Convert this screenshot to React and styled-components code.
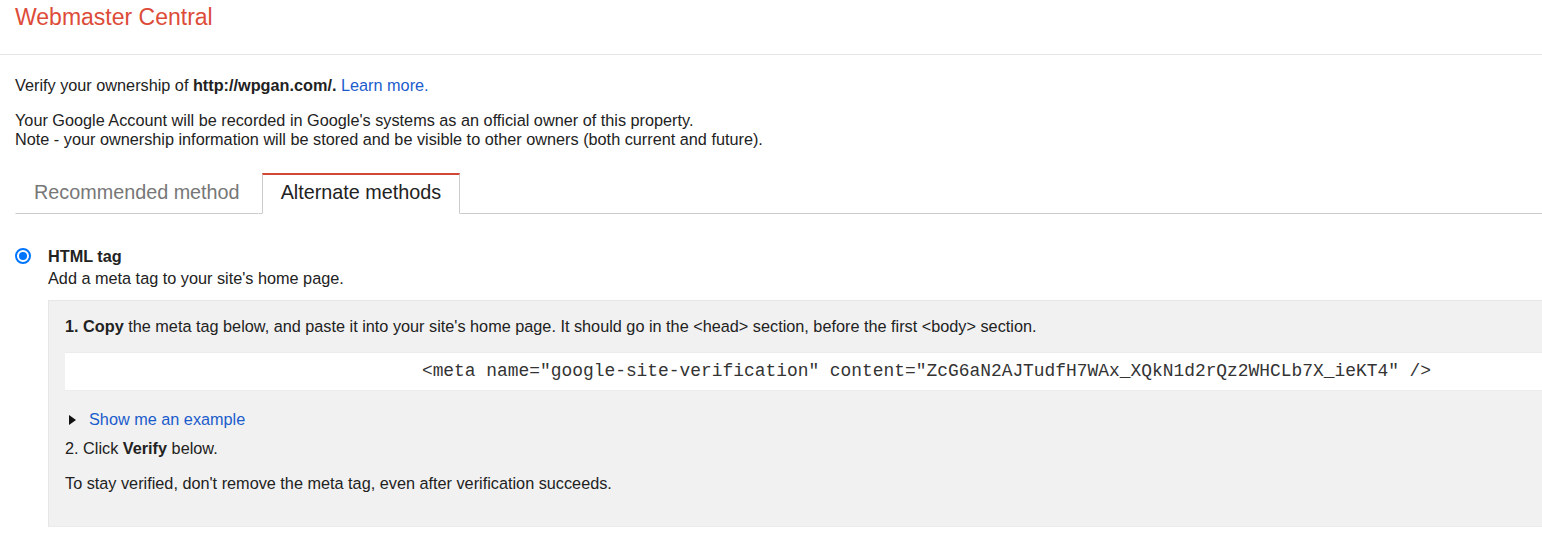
import React from "react";
import styled, { createGlobalStyle } from "styled-components";

const Global = createGlobalStyle`
  html, body {
    margin: 0;
    padding: 0;
    overflow: hidden;
    background: #fff;
  }
  body {
    font-family: "Liberation Sans", Arial, sans-serif;
    font-size: 16.25px;
    line-height: 19px;
    color: #222;
  }
`;

const Page = styled.div`
  width: 1820px;
`;

const Header = styled.header`
  box-sizing: border-box;
  height: 55px;
  padding: 4px 0 0 15px;
  border-bottom: 1px solid #e5e5e5;
`;

const Title = styled.h1`
  margin: 0;
  font-size: 23px;
  line-height: 27px;
  font-weight: normal;
  color: #dd4b39;
`;

const Main = styled.main`
  padding: 21px 0 0 15px;
`;

const Para = styled.p`
  margin: ${(p) => p.$mt || 0}px 0 0;
`;

const Link = styled.a`
  color: #1a5ccc;
  text-decoration: none;
  cursor: pointer;
`;

const TabStrip = styled.div`
  display: flex;
  gap: 3px;
  margin-top: 24px;
  border-bottom: 1px solid #cccccc;
`;

const Tab = styled.div`
  padding: 5px 18px 9px;
  font-size: 19.8px;
  line-height: 24px;
  color: ${(p) => (p.$active ? "#222" : "#777")};
  border-top: 2px solid ${(p) => (p.$active ? "#d14836" : "transparent")};
  border-left: 1px solid ${(p) => (p.$active ? "#cccccc" : "transparent")};
  border-right: 1px solid ${(p) => (p.$active ? "#cccccc" : "transparent")};
  border-bottom: 1px solid ${(p) => (p.$active ? "#fff" : "#cccccc")};
  background: #fff;
  margin-bottom: -1px;
  cursor: pointer;
`;

const Option = styled.div`
  display: flex;
  gap: 17px;
  margin-top: 33px;
`;

const Radio = styled.span`
  box-sizing: border-box;
  flex: none;
  width: 16px;
  height: 16px;
  margin-top: 1px;
  border-radius: 50%;
  border: 2px solid #0075ff;
  padding: 2px;
  display: flex;
  &::after {
    content: "";
    flex: 1;
    border-radius: 50%;
    background: #0075ff;
  }
`;

const OptionBody = styled.div`
  display: flex;
  flex-direction: column;
`;

const OptionTitle = styled.div`
  font-weight: bold;
`;

const OptionDesc = styled.div`
  margin-top: 3px;
`;

const Panel = styled.div`
  box-sizing: border-box;
  width: 1756px;
  margin: 12px 0 0 33px;
  padding: 16px 16px 33px;
  background: #f1f1f1;
  border: 1px solid #e6e6e6;
  border-right: none;
  border-bottom-color: #ebebeb;
`;

const CodeBox = styled.div`
  margin-top: 16px;
  padding: 9px 0;
  background: #fff;
  border-top: 1px solid #ececec;
  border-bottom: 1px solid #ececec;
  font-family: "Liberation Mono", "Courier New", monospace;
  font-size: 17.9px;
  line-height: 19px;
  text-align: center;
  color: #333;
`;

const Expander = styled.div`
  display: flex;
  align-items: center;
  gap: 14px;
  margin-top: 19px;
  padding-left: 4px;
`;

const Triangle = styled.span`
  width: 0;
  height: 0;
  border-top: 5px solid transparent;
  border-bottom: 5px solid transparent;
  border-left: 7px solid #111;
  margin: 1px -1px 0 0;
`;

export default function App() {
  return (
    <>
      <Global />
      <Page>
        <Header>
          <Title>Webmaster Central</Title>
        </Header>
        <Main>
          <Para>
            Verify your ownership of <b>http://wpgan.com/.</b>{" "}
            <Link>Learn more.</Link>
          </Para>
          <Para $mt={16}>
            Your Google Account will be recorded in Google's systems as an
            official owner of this property.
            <br />
            Note - your ownership information will be stored and be visible to
            other owners (both current and future).
          </Para>
          <TabStrip>
            <Tab>Recommended method</Tab>
            <Tab $active>Alternate methods</Tab>
          </TabStrip>
          <Option>
            <Radio />
            <OptionBody>
              <OptionTitle>HTML tag</OptionTitle>
              <OptionDesc>Add a meta tag to your site's home page.</OptionDesc>
            </OptionBody>
          </Option>
          <Panel>
            <Para>
              <b>1. Copy</b> the meta tag below, and paste it into your site's
              home page. It should go in the &lt;head&gt; section, before the
              first &lt;body&gt; section.
            </Para>
            <CodeBox>
              &lt;meta name="google-site-verification"
              content="ZcG6aN2AJTudfH7WAx_XQkN1d2rQz2WHCLb7X_ieKT4" /&gt;
            </CodeBox>
            <Expander>
              <Triangle />
              <Link>Show me an example</Link>
            </Expander>
            <Para $mt={10}>
              2. Click <b>Verify</b> below.
            </Para>
            <Para $mt={16}>
              To stay verified, don't remove the meta tag, even after
              verification succeeds.
            </Para>
          </Panel>
        </Main>
      </Page>
    </>
  );
}
